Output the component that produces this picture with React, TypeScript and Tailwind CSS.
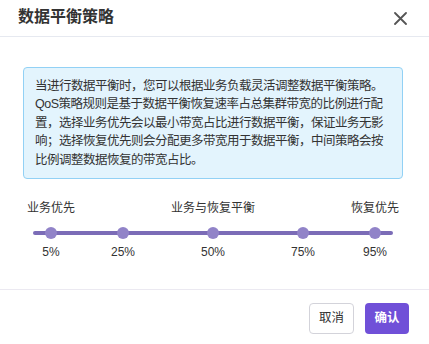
import React from "react";

const FONT = "font-['Liberation_Sans','Noto_Sans_CJK_SC',sans-serif]";

const lines = [
  "当进行数据平衡时，您可以根据业务负载灵活调整数据平衡策略。",
  "QoS策略规则是基于数据平衡恢复速率占总集群带宽的比例进行配",
  "置，选择业务优先会以最小带宽占比进行数据平衡，保证业务无影",
  "响；选择恢复优先则会分配更多带宽用于数据平衡，中间策略会按",
  "比例调整数据恢复的带宽占比。",
];

const marks = [
  { label: "5%", pos: "left-[5%]" },
  { label: "25%", pos: "left-[25%]" },
  { label: "50%", pos: "left-[50%]" },
  { label: "75%", pos: "left-[75%]" },
  { label: "95%", pos: "left-[95%]" },
];

export default function App() {
  return (
    <div className={`w-[429px] h-[344px] bg-white flex flex-col text-[#333] ${FONT}`}>
      <div className="h-[37px] shrink-0 border-b border-[#e6e9f0] flex items-center justify-between pl-[18px] pr-[22px] pb-[3px]">
        <span className="text-[16px] font-semibold leading-none">数据平衡策略</span>
        <button type="button" className="text-[#555] mt-[3px]">
          <svg width="13" height="13" viewBox="0 0 13 13" fill="none">
            <path d="M1 1L12 12M12 1L1 12" stroke="currentColor" strokeWidth="1.8" strokeLinecap="round" />
          </svg>
        </button>
      </div>

      <div className="h-[252px] shrink-0 pt-[30px]">
        <div className="ml-[23px] w-[380px] rounded-[4px] border border-[#92d1f5] bg-[#e3f4fd] px-[11px] py-[9px] text-[12.5px] tracking-[-0.5px] leading-[18.4px] text-[#333]">
          {lines.map((l) => (
            <div key={l} className="whitespace-nowrap">
              {l}
            </div>
          ))}
        </div>

        <div className="mt-[21px] ml-[27px] w-[372px] flex justify-between text-[12px] leading-[16px]">
          <span>业务优先</span>
          <span>业务与恢复平衡</span>
          <span>恢复优先</span>
        </div>

        <div className="relative mt-[11px] ml-[33px] w-[360px] h-[12px] flex items-center">
          <div className="w-full h-[4px] rounded-full bg-[#7b6cb7]" />
          {marks.map((m) => (
            <span
              key={m.label}
              className={`absolute top-0 ${m.pos} -translate-x-1/2 w-[12px] h-[12px] rounded-full bg-[#9183c8]`}
            />
          ))}
        </div>

        <div className="relative mt-[5px] ml-[33px] w-[360px] h-[16px] text-[12px] leading-[16px]">
          {marks.map((m) => (
            <span key={m.label} className={`absolute top-0 ${m.pos} -translate-x-1/2`}>
              {m.label}
            </span>
          ))}
        </div>
      </div>

      <div className="flex-1 border-t border-[#ebe9f1] flex justify-end items-start gap-[11px] pt-[13px] pr-[20px]">
        <button
          type="button"
          className="w-[45px] h-[31px] rounded-[4px] border border-[#d3d3da] bg-white text-[12.5px] text-[#333]"
        >
          取消
        </button>
        <button
          type="button"
          className="w-[44px] h-[31px] rounded-[4px] bg-[#7050d8] text-[12.5px] font-semibold text-white"
        >
          确认
        </button>
      </div>
    </div>
  );
}
